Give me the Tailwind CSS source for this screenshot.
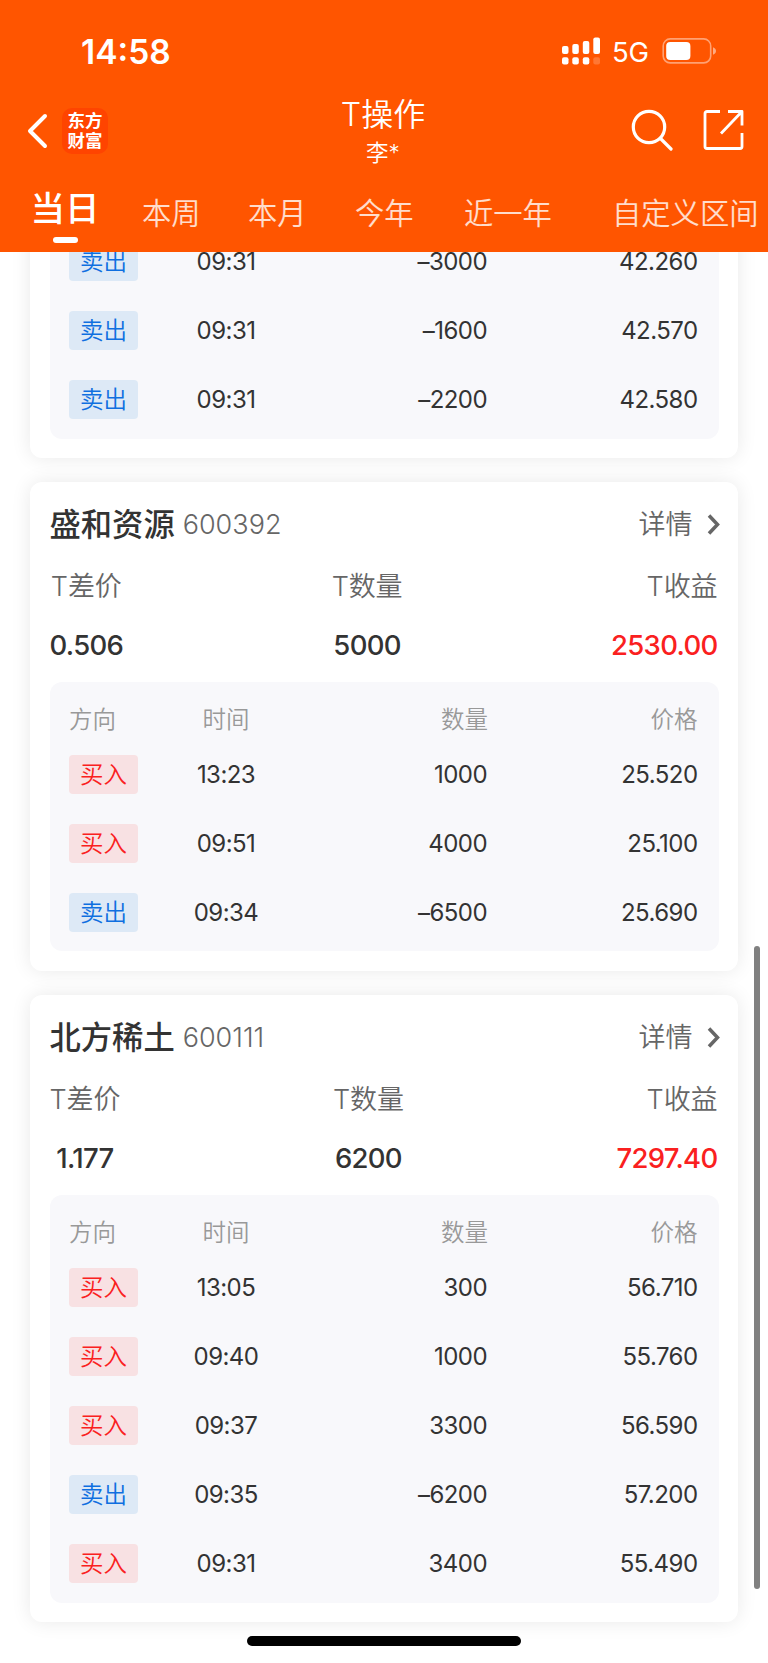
<!DOCTYPE html>
<html lang="zh-CN">
<head>
  <meta charset="UTF-8" />
  <title>T操作</title>
  <script src="https://cdn.jsdelivr.net/npm/@tailwindcss/browser@4"></script>
</head>
<body class="relative w-[768px] h-[1663px] overflow-hidden bg-white text-[#333] font-['Inter','Noto_Sans_CJK_SC',sans-serif]">
  <!-- Header -->
  <header class="relative z-10 h-[252px] bg-[#ff5500] text-white">
    <!-- Status bar -->
    <div class="h-[96px] pt-[2px] pl-[81px] pr-[51px] flex items-center justify-between">
      <span class="pt-[7px] text-[33.500px] font-semibold leading-none">14:58</span>
      <div class="flex items-center pt-[3px]">
        <svg class="w-[40px] h-[28px]" viewBox="0 0 40 28" fill="#fff">
          <rect x="0" y="9" width="6.500" height="8" rx="2"/>
          <rect x="10.300" y="7" width="6.500" height="10" rx="2"/>
          <rect x="20.800" y="4" width="6.500" height="13" rx="2"/>
          <rect x="31.300" y="0.500" width="6.700" height="16.500" rx="2"/>
          <rect x="0" y="20.300" width="6.500" height="7.300" rx="2"/>
          <rect x="10.300" y="20.300" width="6.500" height="7.300" rx="2"/>
          <rect x="20.800" y="20.300" width="6.500" height="7.300" rx="2"/>
          <rect x="31.300" y="20.300" width="6.700" height="7.300" rx="2" opacity="0.2"/>
        </svg>
        <span class="ml-[10px] w-[38px] pt-[4px] text-[27.500px] leading-none tracking-[-0.3px]">5G</span>
        <svg class="ml-[12px] w-[55px] h-[26px]" viewBox="0 0 55 26" fill="none">
          <rect x="1.200" y="0.900" width="47.500" height="24" rx="7" stroke="#fff" stroke-opacity="0.45" stroke-width="1.600"/>
          <rect x="4.200" y="4" width="24.200" height="18" rx="4" fill="#fff"/>
          <path d="M51 9.300c1.800.8 3 2 3 3.700s-1.200 2.900-3 3.700z" fill="#fff" fill-opacity="0.5"/>
        </svg>
      </div>
    </div>

    <!-- Title bar -->
    <div class="relative h-[78px] pl-[25px] pr-[24px] flex items-center justify-between">
      <div class="flex items-center pb-[9px]">
        <svg class="w-[24px] h-[38px]" viewBox="0 0 24 38" fill="none" stroke="#fff" stroke-width="4" stroke-linecap="round" stroke-linejoin="round">
          <path d="M20 4L5 19l15 15"/>
        </svg>
        <div class="ml-[13px] w-[46px] h-[46px] rounded-[10px] bg-[#ff4400] flex flex-col items-center justify-center text-[17.500px] leading-[20px] font-bold">
          <span>东方</span>
          <span>财富</span>
        </div>
      </div>
      <div class="absolute left-1/2 top-0 -translate-x-1/2 -ml-[1px] flex flex-col items-center whitespace-nowrap">
        <h1 class="text-[32px] leading-[38px] font-[350]">T操作</h1>
        <p class="text-[22.500px] leading-[38px] font-[350]">李*</p>
      </div>
      <div class="flex items-center gap-[29px] pb-[10px]">
        <svg class="w-[44px] h-[44px]" viewBox="0 0 44 44" fill="none" stroke="#fff" stroke-width="3.200" stroke-linecap="round">
          <circle cx="20" cy="19" r="15.700"/>
          <path d="M31.500 30.500L42 41"/>
        </svg>
        <svg class="w-[42px] h-[42px]" viewBox="0 0 42 42" fill="none" stroke="#fff" stroke-width="2.800">
          <path d="M18 2.500H5a2 2 0 0 0-2 2v33a2 2 0 0 0 2 2h33a2 2 0 0 0 2-2V24"/>
          <path d="M26 2.500h14v14M39.500 3L19 24.500" stroke-linejoin="round"/>
        </svg>
      </div>
    </div>

    <!-- Period tabs -->
    <nav class="h-[78px] pl-[30px] flex items-start whitespace-nowrap text-[29.300px] leading-[40px] font-[350] text-white/80">
      <div class="w-[70px] pt-[14px] flex flex-col items-center text-white">
        <span class="text-[34.500px] leading-[42px] font-medium">当日</span>
        <span class="mt-[7px] w-[25px] h-[6px] rounded-full bg-white"></span>
      </div>
      <span class="w-[106px] ml-[42px] pt-[20px]">本周</span>
      <span class="w-[107px] pt-[20px]">本月</span>
      <span class="w-[109px] pt-[20px]">今年</span>
      <span class="w-[148px] pt-[20px]">近一年</span>
      <span class="pt-[20px]">自定义区间</span>
    </nav>
  </header>

  <main class="-mt-[100px] mx-[30px] flex flex-col gap-[24px] text-[24px] tracking-[-0.55px]">
    <!-- Card scrolled under the header -->
    <section class="h-[306px] px-[19.500px] pb-[19px] flex flex-col justify-end rounded-xl bg-white shadow-[0_0_20px_rgba(0,0,0,0.09)]">
      <div class="pl-[19.500px] pr-[21px] pb-[5px] rounded-xl bg-[#f8f8fb]">
        <div class="h-[69px] grid grid-cols-[107px_100px_211px_1fr] items-center">
          <span class="w-[69px] h-[39px] rounded-[4px] bg-[#dde9f6] text-[#0f6fe0] text-[23.500px] leading-[40px] text-center font-[350] tracking-normal">卖出</span>
          <span class="text-center">09:31</span><span class="text-right">–3000</span><span class="text-right">42.260</span>
        </div>
        <div class="h-[69px] grid grid-cols-[107px_100px_211px_1fr] items-center">
          <span class="w-[69px] h-[39px] rounded-[4px] bg-[#dde9f6] text-[#0f6fe0] text-[23.500px] leading-[40px] text-center font-[350] tracking-normal">卖出</span>
          <span class="text-center">09:31</span><span class="text-right">–1600</span><span class="text-right">42.570</span>
        </div>
        <div class="h-[69px] grid grid-cols-[107px_100px_211px_1fr] items-center">
          <span class="w-[69px] h-[39px] rounded-[4px] bg-[#dde9f6] text-[#0f6fe0] text-[23.500px] leading-[40px] text-center font-[350] tracking-normal">卖出</span>
          <span class="text-center">09:31</span><span class="text-right">–2200</span><span class="text-right">42.580</span>
        </div>
      </div>
    </section>

    <!-- 盛和资源 -->
    <section class="h-[489px] px-[19.500px] rounded-xl bg-white shadow-[0_0_20px_rgba(0,0,0,0.09)]">
      <div class="h-[84px] pt-[2px] flex items-center justify-between">
        <h2 class="flex items-center text-[31.300px] font-medium tracking-normal">盛和资源<span class="ml-[8px] text-[27px] font-[350] text-[#666]">600392</span></h2>
        <a class="flex items-center text-[27px] font-[350] tracking-normal text-[#666]">详情
          <svg class="ml-[13px] -mr-px w-[14px] h-[22px]" viewBox="0 0 14 22" fill="none" stroke="#666" stroke-width="3.500"><path d="M3 1.500l8.500 9-8.500 9"/></svg>
        </a>
      </div>
      <div class="h-[116px] pt-px pr-px flex justify-between text-[27px] leading-[40px] text-[#666]">
        <div class="flex flex-col items-center"><span class="font-[350] tracking-[-0.1px]">T差价</span><span class="mt-[18px] text-[27.500px] font-medium tracking-[-0.7px] text-[#333]">0.506</span></div>
        <div class="flex flex-col items-center"><span class="font-[350] tracking-[-0.1px]">T数量</span><span class="mt-[18px] text-[27.500px] font-medium tracking-[-0.7px] text-[#333]">5000</span></div>
        <div class="flex flex-col items-end"><span class="font-[350] tracking-[-0.1px]">T收益</span><span class="mt-[18px] text-[27.500px] font-medium tracking-[-0.7px] text-[#fa2020]">2530.00</span></div>
      </div>
      <div class="h-[269px] pl-[19.500px] pr-[21px] rounded-xl bg-[#f8f8fb]">
        <div class="h-[58px] pt-[18px] grid grid-cols-[107px_100px_212px_1fr] items-center text-[23.500px] font-[350] tracking-normal text-[#999]">
          <span>方向</span><span class="text-center">时间</span><span class="text-right">数量</span><span class="text-right">价格</span>
        </div>
        <div class="h-[69px] grid grid-cols-[107px_100px_211px_1fr] items-center">
          <span class="w-[69px] h-[39px] rounded-[4px] bg-[#f8e1e3] text-[#fa2020] text-[23.500px] leading-[40px] text-center font-[350] tracking-normal">买入</span>
          <span class="text-center">13:23</span><span class="text-right">1000</span><span class="text-right">25.520</span>
        </div>
        <div class="h-[69px] grid grid-cols-[107px_100px_211px_1fr] items-center">
          <span class="w-[69px] h-[39px] rounded-[4px] bg-[#f8e1e3] text-[#fa2020] text-[23.500px] leading-[40px] text-center font-[350] tracking-normal">买入</span>
          <span class="text-center">09:51</span><span class="text-right">4000</span><span class="text-right">25.100</span>
        </div>
        <div class="h-[69px] grid grid-cols-[107px_100px_211px_1fr] items-center">
          <span class="w-[69px] h-[39px] rounded-[4px] bg-[#dde9f6] text-[#0f6fe0] text-[23.500px] leading-[40px] text-center font-[350] tracking-normal">卖出</span>
          <span class="text-center">09:34</span><span class="text-right">–6500</span><span class="text-right">25.690</span>
        </div>
      </div>
    </section>

    <!-- 北方稀土 -->
    <section class="h-[627px] px-[19.500px] rounded-xl bg-white shadow-[0_0_20px_rgba(0,0,0,0.09)]">
      <div class="h-[84px] pt-[2px] flex items-center justify-between">
        <h2 class="flex items-center text-[31.300px] font-medium tracking-normal">北方稀土<span class="ml-[8px] text-[27px] font-[350] text-[#666]">600111</span></h2>
        <a class="flex items-center text-[27px] font-[350] tracking-normal text-[#666]">详情
          <svg class="ml-[13px] -mr-px w-[14px] h-[22px]" viewBox="0 0 14 22" fill="none" stroke="#666" stroke-width="3.500"><path d="M3 1.500l8.500 9-8.500 9"/></svg>
        </a>
      </div>
      <div class="h-[116px] pt-px pr-px flex justify-between text-[27px] leading-[40px] text-[#666]">
        <div class="flex flex-col items-center"><span class="font-[350] tracking-[-0.1px]">T差价</span><span class="mt-[18px] text-[27.500px] font-medium tracking-[-0.7px] text-[#333]">1.177</span></div>
        <div class="flex flex-col items-center"><span class="font-[350] tracking-[-0.1px]">T数量</span><span class="mt-[18px] text-[27.500px] font-medium tracking-[-0.7px] text-[#333]">6200</span></div>
        <div class="flex flex-col items-end"><span class="font-[350] tracking-[-0.1px]">T收益</span><span class="mt-[18px] text-[27.500px] font-medium tracking-[-0.7px] text-[#fa2020]">7297.40</span></div>
      </div>
      <div class="h-[408px] pl-[19.500px] pr-[21px] rounded-xl bg-[#f8f8fb]">
        <div class="h-[58px] pt-[18px] grid grid-cols-[107px_100px_212px_1fr] items-center text-[23.500px] font-[350] tracking-normal text-[#999]">
          <span>方向</span><span class="text-center">时间</span><span class="text-right">数量</span><span class="text-right">价格</span>
        </div>
        <div class="h-[69px] grid grid-cols-[107px_100px_211px_1fr] items-center">
          <span class="w-[69px] h-[39px] rounded-[4px] bg-[#f8e1e3] text-[#fa2020] text-[23.500px] leading-[40px] text-center font-[350] tracking-normal">买入</span>
          <span class="text-center">13:05</span><span class="text-right">300</span><span class="text-right">56.710</span>
        </div>
        <div class="h-[69px] grid grid-cols-[107px_100px_211px_1fr] items-center">
          <span class="w-[69px] h-[39px] rounded-[4px] bg-[#f8e1e3] text-[#fa2020] text-[23.500px] leading-[40px] text-center font-[350] tracking-normal">买入</span>
          <span class="text-center">09:40</span><span class="text-right">1000</span><span class="text-right">55.760</span>
        </div>
        <div class="h-[69px] grid grid-cols-[107px_100px_211px_1fr] items-center">
          <span class="w-[69px] h-[39px] rounded-[4px] bg-[#f8e1e3] text-[#fa2020] text-[23.500px] leading-[40px] text-center font-[350] tracking-normal">买入</span>
          <span class="text-center">09:37</span><span class="text-right">3300</span><span class="text-right">56.590</span>
        </div>
        <div class="h-[69px] grid grid-cols-[107px_100px_211px_1fr] items-center">
          <span class="w-[69px] h-[39px] rounded-[4px] bg-[#dde9f6] text-[#0f6fe0] text-[23.500px] leading-[40px] text-center font-[350] tracking-normal">卖出</span>
          <span class="text-center">09:35</span><span class="text-right">–6200</span><span class="text-right">57.200</span>
        </div>
        <div class="h-[69px] grid grid-cols-[107px_100px_211px_1fr] items-center">
          <span class="w-[69px] h-[39px] rounded-[4px] bg-[#f8e1e3] text-[#fa2020] text-[23.500px] leading-[40px] text-center font-[350] tracking-normal">买入</span>
          <span class="text-center">09:31</span><span class="text-right">3400</span><span class="text-right">55.490</span>
        </div>
      </div>
    </section>
  </main>

  <!-- Scrollbar and home indicator -->
  <div class="absolute right-[8px] top-[946px] w-[6px] h-[643px] rounded-full bg-[#808080]"></div>
  <div class="absolute left-[247px] top-[1636px] w-[274px] h-[10px] rounded-full bg-black"></div>
</body>
</html>
